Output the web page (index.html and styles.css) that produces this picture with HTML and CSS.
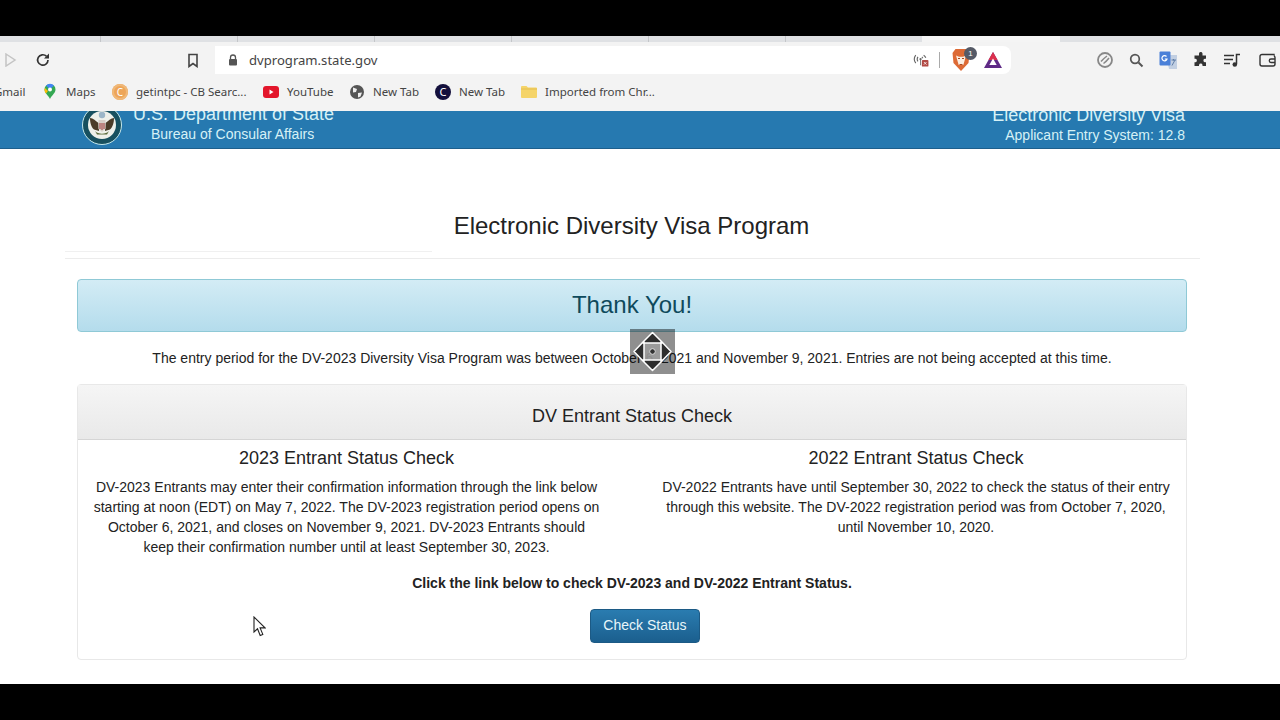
FILE: index.html
```html
<!DOCTYPE html>
<html lang="en">
<head>
  <meta charset="UTF-8" />
  <title>Electronic Diversity Visa Program</title>
  <link rel="stylesheet" href="styles.css">
</head>
<body>
  <div class="screen">
    <div class="letterbox-top"></div>

    <div class="tab-strip">
      <span class="tab"></span><span class="tab"></span><span class="tab"></span><span class="tab"></span><span class="tab"></span><span class="tab"></span>
      <span class="tab tab-active"></span>
    </div>

    <div class="toolbar">
      <div class="nav-buttons">
        <svg class="icon-forward" width="12" height="14" viewBox="0 0 12 14"><path d="M1 1l9 6-9 6z" fill="none" stroke="#c4c4c4" stroke-width="1.5"/></svg>
        <svg class="icon-reload" width="16" height="16" viewBox="0 0 16 16"><path d="M13 8a5.2 5.2 0 1 1-1.6-3.8" fill="none" stroke="#333" stroke-width="1.7"/><path d="M14 1.5v5h-5z" fill="#333"/></svg>
        <svg class="icon-bookmark" width="12" height="15" viewBox="0 0 12 15"><path d="M2 1.5h8v12l-4-3-4 3z" fill="none" stroke="#444" stroke-width="1.6"/></svg>
      </div>
      <div class="omnibox">
        <svg class="icon-lock" width="10" height="12" viewBox="0 0 10 12"><path d="M2.5 5V3.500a2.500 2.500 0 0 1 5 0V5" fill="none" stroke="#555" stroke-width="1.300"/><rect x="1" y="5" width="8" height="6.500" rx="1" fill="#555"/></svg>
        <span class="url">dvprogram.state.gov</span>
        <div class="omnibox-icons">
          <svg width="16" height="14" viewBox="0 0 18 16"><path d="M3 2.500a7.500 7.500 0 0 0 0 9M5.500 4.500a4.500 4.500 0 0 0 0 5M12 2.500a7 7 0 0 1 2.500 3M10 4.500a4 4 0 0 1 1 1.500" fill="none" stroke="#666" stroke-width="1.300"/><circle cx="8.500" cy="7" r="1.300" fill="#666"/><path d="M8.500 8v6" stroke="#666" stroke-width="1"/><rect x="10" y="8" width="7.500" height="7.500" rx="1" fill="#b24a45"/><path d="M12.300 10.300l3 3M15.300 10.300l-3 3" stroke="#fff" stroke-width=".9"/></svg>
          <span class="omni-divider"></span>
          <div class="brave">
            <svg width="20" height="24" viewBox="0 0 20 24"><path d="M4.500 1h11l3 4-1 10-7.500 8L2.500 15l-1-10z" fill="#dd6a35"/><path d="M5 7.500l3 1.200h4l3-1.200-1.500 5.500-1.200 4h-4.600l-1.200-4z" fill="#fbeee2"/><path d="M7 10.500h2M11 10.500h2M8.500 16.500h3" stroke="#a8481f" stroke-width="1.100"/></svg>
            <span class="brave-count">1</span>
          </div>
          <svg class="bat" width="20" height="18" viewBox="0 0 20 18"><path d="M10 1l9 16H1z" fill="#5f2a86"/><path d="M10 1l4.500 8h-9z" fill="#dc2f4c"/><path d="M10 7.500l3.700 6.500H6.300z" fill="#fff"/></svg>
        </div>
      </div>
      <div class="toolbar-icons">
        <svg width="18" height="18" viewBox="0 0 18 18"><circle cx="9" cy="9" r="7" fill="none" stroke="#888" stroke-width="1.800"/><path d="M5 10.500C7 8 9 6.500 11 5M7.500 12.500C9.500 11 11.500 9 13 7" fill="none" stroke="#888" stroke-width="1.500"/></svg>
        <svg width="15" height="15" viewBox="0 0 15 15"><circle cx="6" cy="6" r="4.300" fill="none" stroke="#555" stroke-width="1.700"/><path d="M9.500 9.500l4 4" stroke="#555" stroke-width="1.900"/></svg>
        <svg width="19" height="19" viewBox="0 0 19 19"><path d="M7 4h11v14H10z" fill="#c2cfe2"/><rect x="0.500" y="0.500" width="11" height="14" rx="1" fill="#4a80d8"/><path d="M12.500 9h4.500M14.500 8v1.500M13 14.500l3-5.500" stroke="#5f7ea8" stroke-width="1"/><path d="M7.500 5.500A2.600 2.600 0 1 0 8 8H5.800" fill="none" stroke="#fff" stroke-width="1.200"/></svg>
        <svg width="16" height="16" viewBox="0 0 16 16"><path d="M6 1.500a1.800 1.800 0 0 1 3.500 0V3.500H13v3.300h-1.200a1.800 1.800 0 0 0 0 3.500H13V14H9.500v-1a1.800 1.800 0 0 0-3.500 0v1H1.500v-3.800h1a1.800 1.800 0 0 0 0-3.500h-1V3.500H6z" fill="#333"/></svg>
        <svg width="17" height="15" viewBox="0 0 17 15"><path d="M0 2.500h10M0 6.500h9M0 10.500h6" stroke="#333" stroke-width="1.500"/><path d="M12.500 11V1.500H16" fill="none" stroke="#333" stroke-width="1.500"/><circle cx="10.800" cy="11.500" r="2.300" fill="#333"/></svg>
        <svg class="icon-wallet" width="17" height="14" viewBox="0 0 17 14"><path d="M15 2.500V1.500H3a2 2 0 0 0-2 2V11a2 2 0 0 0 2 2h11a2 2 0 0 0 2-2V4.500a2 2 0 0 0-1-1.700" fill="none" stroke="#333" stroke-width="1.400"/><path d="M16 6h-4a1.500 1.500 0 0 0 0 3.500h4" fill="none" stroke="#333" stroke-width="1.300"/></svg>
      </div>
    </div>

    <div class="bookmarks">
      <span class="bm bm-gmail">Gmail</span>
      <span class="bm bm-maps">
        <svg width="14" height="17" viewBox="0 0 14 17"><path d="M7 1a5.500 5.500 0 0 1 5.500 5.500C12.500 10 9 12 7 16 5 12 1.500 10 1.500 6.500A5.500 5.500 0 0 1 7 1z" fill="#34a853"/><path d="M3 2.500a5.500 5.500 0 0 1 8 0L7 6.500z" fill="#4285f4"/><path d="M2 5l3 3-2 2.500A6 6 0 0 1 1.500 6.500z" fill="#fbbc04"/><circle cx="7" cy="6.500" r="2" fill="#fff"/></svg>
        Maps</span>
      <span class="bm bm-getintpc"><span class="fav-c">C</span>getintpc - CB Searc...</span>
      <span class="bm bm-youtube">
        <svg width="16" height="12" viewBox="0 0 16 12"><rect width="16" height="12" rx="3" fill="#e3162b"/><path d="M6.500 3.500l4 2.500-4 2.500z" fill="#fff"/></svg>
        YouTube</span>
      <span class="bm bm-newtab1">
        <svg width="14" height="14" viewBox="0 0 14 14"><circle cx="7" cy="7" r="7" fill="#555"/><path d="M3 2.500l4 1.500-1 3-3 .500zM8 8l4-.500-1.500 4-2.500 1z" fill="#eee"/></svg>
        New Tab</span>
      <span class="bm bm-newtab2"><span class="fav-dark">C</span>New Tab</span>
      <span class="bm bm-folder">
        <svg width="16" height="13" viewBox="0 0 16 13"><path d="M0 2a1 1 0 0 1 1-1h4.500l1.500 1.500h8a1 1 0 0 1 1 1V12a1 1 0 0 1-1 1H1a1 1 0 0 1-1-1z" fill="#f5d469"/><path d="M0 4h16" stroke="#e0b94a" stroke-width=".8"/></svg>
        Imported from Chr...</span>
    </div>

    <header class="site-header">
      <div class="header-left">
        <svg class="seal" width="40" height="40" viewBox="0 0 40 40">
          <circle cx="20" cy="20" r="19.500" fill="#17505f" stroke="#c6e8ea" stroke-width="1"/>
          <circle cx="20" cy="20" r="14" fill="#eef0ea"/>
          <path d="M8 13c3 0 6 3 8.500 5l.5 8-5-1.500C9 22 8 17 8 13zM32 13c-3 0-6 3-8.500 5l-.5 8 5-1.500C31 22 32 17 32 13z" fill="#4b3c28"/>
          <path d="M16.500 15h7v8.500L20 27l-3.500-3.500z" fill="#d8d0c8"/>
          <path d="M17.500 18h1v6h-1zM19.500 18h1v7h-1zM21.500 18h1v6h-1z" fill="#a23a3a"/>
          <circle cx="20" cy="10" r="3.200" fill="#9cb6c8"/>
          <path d="M13 26c3 3.500 11 3.500 14 0l-2 3.500h-10z" fill="#5b6b3a"/>
        </svg>
        <div class="agency">
          <div class="agency-name">U.S. Department of State</div>
          <div class="agency-sub">Bureau of Consular Affairs</div>
        </div>
      </div>
      <div class="header-right">
        <div class="system-name">Electronic Diversity Visa</div>
        <div class="system-sub">Applicant Entry System: 12.8</div>
      </div>
    </header>

    <main class="content">
      <div class="page-heading">
        <h1>Electronic Diversity Visa Program</h1>
        <div class="rule-short"></div>
        <div class="rule-long"></div>
      </div>

      <div class="inner">
        <div class="alert-box">Thank You!</div>
        <p class="notice">The entry period for the DV-2023 Diversity Visa Program was between October 6, 2021 and November 9, 2021. Entries are not being accepted at this time.</p>

        <section class="panel">
          <div class="panel-heading">DV Entrant Status Check</div>
          <div class="panel-body">
            <div class="columns">
              <div class="col col-left">
                <h2>2023 Entrant Status Check</h2>
                <p>DV-2023 Entrants may enter their confirmation information through the link below starting at noon (EDT) on May 7, 2022. The DV-2023 registration period opens on October 6, 2021, and closes on November 9, 2021. DV-2023 Entrants should keep their confirmation number until at least September 30, 2023.</p>
              </div>
              <div class="col col-right">
                <h2>2022 Entrant Status Check</h2>
                <p>DV-2022 Entrants have until September 30, 2022 to check the status of their entry through this website. The DV-2022 registration period was from October 7, 2020, until November 10, 2020.</p>
              </div>
            </div>
            <p class="click-note">Click the link below to check DV-2023 and DV-2022 Entrant Status.</p>
            <div class="button-row"><a class="check-button">Check Status</a></div>
          </div>
        </section>
      </div>
    </main>

    <div class="letterbox-bottom"></div>

    <!-- autoscroll marker and mouse pointer sit over the page -->
    <div class="scroll-marker">
      <svg width="45" height="45" viewBox="0 0 45 45">
        <rect x="14" y="14" width="17" height="17" fill="#9c9c9c" fill-opacity="0.9"/>
        <path d="M22.500 3.500L33 14H12z M22.500 41.500L33 31H12z M4 22.500L14 12v21z M41 22.500L31 12v21z" fill="#2e2e2e" stroke="#fff" stroke-width="1.500" stroke-linejoin="round"/>
        <circle cx="22.500" cy="22.500" r="2.800" fill="#333" stroke="#ddd" stroke-width="1"/>
      </svg>
    </div>
    <svg class="mouse-pointer" width="13" height="21" viewBox="0 0 13 21"><path d="M1 1v15l3.500-3.200 2.700 6.700 2.600-1.100-2.700-6.500H12z" fill="#fff" stroke="#222" stroke-width="1.100"/></svg>
  </div>
</body>
</html>
```

FILE: styles.css
```css
* {
  box-sizing: border-box;
}

body {
  margin: 0;
  background: #000;
  font-family: "Liberation Sans", Arial, sans-serif;
  color: #222;
}

.screen {
  position: relative;
  width: 1280px;
  height: 720px;
  overflow: hidden;
  display: flex;
  flex-direction: column;
  background: #fff;
}

.letterbox-top {
  height: 36px;
  background: #000;
  flex: none;
}

.letterbox-bottom {
  height: 36px;
  background: #000;
  flex: none;
  margin-top: auto;
}

/* browser chrome */
.tab-strip {
  height: 6px;
  flex: none;
  display: flex;
  background: #dfe1e4;
  padding-left: 100px;
}

.tab {
  width: 137px;
  border-left: 1px solid #c4c6c9;
}

.tab-active {
  width: 138px;
  background: #f4f4f4;
  border-left: 0;
}

.toolbar {
  height: 36px;
  flex: none;
  display: flex;
  align-items: center;
  background: #f3f3f3;
}

.nav-buttons {
  width: 215px;
  display: flex;
  align-items: center;
  flex: none;
  padding-left: 5px;
}

.icon-reload {
  margin-left: 18px;
}

.icon-bookmark {
  margin-left: 136px;
}

.omnibox {
  width: 796px;
  height: 28px;
  flex: none;
  display: flex;
  align-items: center;
  background: #fff;
  border-radius: 0 8px 8px 0;
  padding-left: 13px;
}

.url {
  margin-left: 11px;
  font-family: "Noto Sans", sans-serif;
  font-size: 13.1px;
  color: #444;
}

.omnibox-icons {
  margin-left: auto;
  display: flex;
  align-items: center;
  padding-right: 8px;
}

.omni-divider {
  width: 1px;
  height: 16px;
  background: #aaa;
  margin: 0 11px 0 10px;
}

.brave {
  position: relative;
  display: flex;
  width: 20px;
  height: 24px;
}

.brave-count {
  position: absolute;
  left: 13px;
  top: -1px;
  width: 13px;
  height: 13px;
  border-radius: 50%;
  background: #555a66;
  color: #fff;
  font-size: 8px;
  line-height: 13px;
  text-align: center;
}

.bat {
  margin-left: 12px;
}

.toolbar-icons {
  flex: 1;
  display: flex;
  align-items: center;
  padding-left: 85px;
  gap: 15px;
}

.icon-wallet {
  margin-left: 3px;
}

.bookmarks {
  height: 33px;
  flex: none;
  display: flex;
  align-items: center;
  padding-bottom: 6px;
  background: #f3f3f3;
  font-family: "Noto Sans", sans-serif;
  font-size: 11.5px;
  color: #444;
  white-space: nowrap;
}

.bm {
  display: flex;
  align-items: center;
  gap: 8px;
}

.bm-gmail {
  width: 49px;
  margin-left: -6px;
  flex: none;
}

.bm-maps {
  width: 69px;
  flex: none;
  gap: 9px;
}

.bm-getintpc {
  width: 151px;
  flex: none;
}

.bm-youtube {
  width: 87px;
  flex: none;
}

.bm-newtab1 {
  width: 85px;
  flex: none;
  gap: 9px;
}

.bm-newtab2 {
  width: 86px;
  flex: none;
}

.fav-c {
  width: 16px;
  height: 16px;
  border-radius: 50%;
  background: #eda558;
  box-shadow: inset 0 0 0 2px #f0b878;
  color: #fff;
  font-size: 10px;
  line-height: 16px;
  text-align: center;
}

.fav-dark {
  width: 16px;
  height: 16px;
  border-radius: 50%;
  background: #14103c;
  color: #fff;
  font-size: 11px;
  line-height: 16px;
  text-align: center;
}

/* site header, scrolled so its top edge is cut off */
.site-header {
  height: 38px;
  flex: none;
  display: flex;
  justify-content: space-between;
  overflow: hidden;
  background: #2679b0;
  border-bottom: 1px solid #1d5f8c;
  color: #d6f1f6;
}

.header-left {
  display: flex;
  margin-left: 82px;
  margin-top: -7px;
}

.seal {
  flex: none;
  margin-top: 1px;
}

.agency {
  margin-left: 11px;
}

.agency-name {
  font-size: 18px;
  line-height: 20px;
}

.agency-sub {
  font-size: 14px;
  line-height: 16px;
  margin: 2px 0 0 18px;
}

.header-right {
  text-align: right;
  margin-right: 95px;
  margin-top: -7px;
}

.system-name {
  font-size: 18px;
  line-height: 20px;
  margin-top: 1px;
}

.system-sub {
  font-size: 14px;
  line-height: 16px;
  margin-top: 2px;
}

/* page content */
.content {
  flex: none;
  padding: 0 80px 0 65px;
  background: #fff;
}

.page-heading h1 {
  margin: 0;
  padding-top: 62px;
  font-size: 24px;
  line-height: 30px;
  font-weight: 400;
  text-align: center;
  color: #222;
  width: 1133px;
}

.rule-short {
  width: 367px;
  height: 1px;
  margin-top: 10px;
  background: #f0f0f0;
}

.rule-long {
  height: 1px;
  margin-top: 6px;
  background: #ececec;
}

.inner {
  margin: 20px 13px 0 12px;
}

.alert-box {
  height: 53px;
  border: 1px solid #8fc9d6;
  border-radius: 4px;
  background: linear-gradient(#d3ecf5, #b4dcec);
  color: #0f4a5c;
  font-size: 24px;
  line-height: 49px;
  text-align: center;
}

.notice {
  margin: 16px 0 0;
  font-size: 14px;
  line-height: 20px;
  text-align: center;
}

.panel {
  margin-top: 16px;
  height: 276px;
  border: 1px solid #e8e8e8;
  border-radius: 4px;
}

.panel-heading {
  height: 55px;
  background: linear-gradient(#f5f5f5, #e9e9e9);
  border-bottom: 1px solid #d5d5d5;
  font-size: 18px;
  line-height: 62px;
  text-align: center;
}

.columns {
  display: flex;
  padding-top: 5px;
}

.col {
  width: 538px;
  padding: 0 14px;
  text-align: center;
  font-size: 14px;
  line-height: 20px;
}

.col-left {
  width: 537px;
}

.col-right {
  margin-left: 32px;
}

.col h2 {
  margin: 0;
  font-size: 18px;
  line-height: 26px;
  font-weight: 400;
}

.col p {
  margin: 6px 0 0;
}

.click-note {
  margin: 16px 0 0;
  font-size: 14px;
  line-height: 20px;
  font-weight: 700;
  text-align: center;
}

.button-row {
  display: flex;
  justify-content: center;
  margin: 16px 0 0 26px;
}

.check-button {
  width: 110px;
  height: 34px;
  border: 1px solid #1c5a85;
  border-radius: 4px;
  background: linear-gradient(#2a7cb0, #1b5f8e);
  color: #e8f6fa;
  font-size: 14px;
  line-height: 30px;
  text-align: center;
}

/* overlays */
.scroll-marker {
  position: absolute;
  left: 630px;
  top: 329px;
  width: 45px;
  height: 45px;
  background: rgba(0, 0, 0, 0.44);
}

.mouse-pointer {
  position: absolute;
  left: 253px;
  top: 616px;
}
```
